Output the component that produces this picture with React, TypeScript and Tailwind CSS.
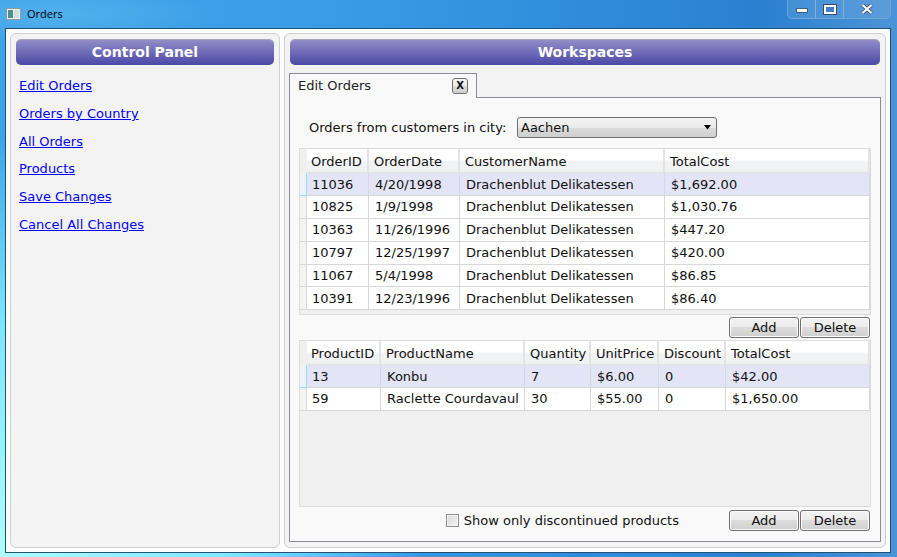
const orders = [
  ["11036", "4/20/1998", "Drachenblut Delikatessen", "$1,692.00"],
  ["10825", "1/9/1998", "Drachenblut Delikatessen", "$1,030.76"],
  ["10363", "11/26/1996", "Drachenblut Delikatessen", "$447.20"],
  ["10797", "12/25/1997", "Drachenblut Delikatessen", "$420.00"],
  ["11067", "5/4/1998", "Drachenblut Delikatessen", "$86.85"],
  ["10391", "12/23/1996", "Drachenblut Delikatessen", "$86.40"],
];
const products = [
  ["13", "Konbu", "7", "$6.00", "0", "$42.00"],
  ["59", "Raclette Courdavaul", "30", "$55.00", "0", "$1,650.00"],
];
const links = ["Edit Orders", "Orders by Country", "All Orders", "Products", "Save Changes", "Cancel All Changes"];

const ordersCols = "grid-cols-[7px_62px_91px_205px_205px]";
const productsCols = "grid-cols-[7px_74px_144px_66px_68px_67px_144px]";
const btnBg = "bg-[linear-gradient(#f3f3f3,#ebebeb_50%,#dddddd_50%,#cfcfcf)]";

function Grid({ cols, headers, rows }: { cols: string; headers: [string, string][]; rows: string[][] }) {
  return (
    <div className="h-[167px] border border-[#dcdcdc] bg-[#f0f0f0] overflow-hidden">
      <div className={`grid ${cols} h-[24.5px]`}>
        <div className="bg-[#f0f0f0]" />
        {headers.map(([h, pad]) => (
          <div key={h} className={`${pad} pt-[3px] flex items-center border-r-2 border-b border-[#e3e3e3] bg-[linear-gradient(#ffffff,#ffffff_45%,#f2f3f5_55%,#eff0f2)] whitespace-nowrap overflow-hidden`}>
            {h}
          </div>
        ))}
      </div>
      {rows.map((r, i) => (
        <div key={i} className={`grid ${cols} h-[22.8px]`}>
          <div className={i === 0 ? "border-r border-b border-[#9ad9f5] bg-[linear-gradient(90deg,#f2f2f2,#e6f5fd)]" : "border-r border-b border-[#d8d8d8] bg-[#f4f4f4]"} />
          {r.map((c, j) => (
            <div key={j} className={`${j === 0 ? "pl-[5px]" : "pl-[6px]"} flex items-center border-r border-b border-[#d8d8d8] whitespace-nowrap overflow-hidden ${i === 0 ? "bg-[#e4e4f7]" : "bg-white"}`}>
              {c}
            </div>
          ))}
        </div>
      ))}
    </div>
  );
}

function Btn({ label }: { label: string }) {
  return (
    <button className={`w-[70px] h-[21px] rounded-[3px] border border-[#707070] ${btnBg} flex items-center justify-center shadow-[inset_0_0_0_1px_#fbfbfb] text-[#111]`}>
      {label}
    </button>
  );
}

function PanelHeader({ title }: { title: string }) {
  return (
    <div className="h-[26px] rounded-[5px] bg-[linear-gradient(#908dc6,#4b48a8)] border-t border-[#a5a5b5] flex items-center justify-center text-white font-bold text-[14px] shrink-0">
      {title}
    </div>
  );
}

export default function App() {
  return (
    <div className="w-[897px] h-[557px] overflow-hidden flex flex-col text-[13px] text-[#111] font-['DejaVu_Sans','Verdana',sans-serif] bg-[radial-gradient(ellipse_420px_420px_at_0%_100%,#aefcff_0%,#7fe6ff_55%,transparent_100%),radial-gradient(ellipse_160px_30px_at_60px_14px,#52b0ec_0%,transparent_100%),linear-gradient(90deg,#3fa3e9,#3a9de6_35%,#2e88d8_72%,#2b80d0_85%,#4c94d8)]">
      {/* Title bar */}
      <div className="h-[28px] shrink-0 flex items-start justify-between pl-[6px] pr-[6px]">
        <div className="flex items-center gap-[6px] h-[28px]">
          <svg width="15" height="12" viewBox="0 0 15 12">
            <rect x="0.5" y="0.5" width="14" height="11" fill="#eef0f0" stroke="#8c9aa6" />
            <rect x="2" y="2" width="5" height="8" fill="#4d8f8f" />
            <rect x="8" y="2" width="5" height="8" fill="#d6dedf" />
          </svg>
          <span className="text-[11px] text-black font-['Open_Sans',sans-serif]">Orders</span>
        </div>
        <div className="flex h-[19px] w-[104px] border border-t-0 border-[#6fa6d8] rounded-b-[5px] bg-[#ffffff18]">
          <div className="w-[28px] flex items-center justify-center border-r border-[#7fb0de]">
            <div className="w-[12px] h-[5px] mt-[3px] bg-white border border-[#4a5a70]" />
          </div>
          <div className="w-[28px] flex items-center justify-center border-r border-[#7fb0de]">
            <div className="w-[12px] h-[9px] border-2 border-white bg-[#3f7fc8] outline outline-1 outline-[#3a4a60]" />
          </div>
          <div className="flex-1 flex items-center justify-center">
            <svg width="12" height="10" viewBox="0 0 12 10">
              <path d="M1.5 1 L10.5 9 M10.5 1 L1.5 9" stroke="#3a4a60" strokeWidth="3.6" />
              <path d="M1.5 1 L10.5 9 M10.5 1 L1.5 9" stroke="#ffffff" strokeWidth="2.2" />
            </svg>
          </div>
        </div>
      </div>

      {/* Client area */}
      <div className="mx-[5px] mr-[6px] h-[525px] border border-[#1f5273] bg-white p-[4px] flex gap-[4px] shrink-0">
        {/* Left panel */}
        <div className="w-[270px] h-[515px] rounded-[6px] border border-[#cfcfcf] bg-[#f3f3f3] p-[5px] flex flex-col">
          <PanelHeader title="Control Panel" />
          <div className="mt-[7.2px] flex flex-col pl-[3px]">
            {links.map((l) => (
              <a key={l} className="h-[27.7px] flex items-center text-[#0000ff] underline cursor-pointer">{l}</a>
            ))}
          </div>
        </div>

        {/* Right panel */}
        <div className="w-[602px] h-[515px] rounded-[6px] border border-[#cfcfcf] bg-[#f3f3f3] p-[5px] flex flex-col">
          <PanelHeader title="Workspaces" />
          {/* Tab strip */}
          <div className="-ml-[1px] mt-[8px] relative z-10 w-[188px] h-[25px] -mb-[1px] border border-b-0 border-[#898c95] bg-[#f9f9f9] flex items-center justify-between pl-[8px] pr-[8px]">
            <span className="text-[#222]">Edit Orders</span>
            <button className={`w-[16px] h-[16px] rounded-[3px] border border-[#707070] ${btnBg} flex items-center justify-center text-[10px] font-bold leading-none`}>X</button>
          </div>
          {/* Tab content */}
          <div className="-ml-[1px] w-[592px] h-[446px] border border-[#898c95] bg-[#f9f9f9] px-[9px] pt-[19px] flex flex-col">
            <div className="flex items-center h-[21px] pl-[10px]">
              <span className="w-[208px]">Orders from customers in city:</span>
              <div className={`relative w-[200px] h-[21px] rounded-[3px] border border-[#707070] ${btnBg} flex items-center pl-[3px]`}>
                Aachen
                <svg className="absolute right-[5px] top-[7px]" width="7" height="5" viewBox="0 0 7 5"><path d="M0 0H7L3.5 4.5Z" fill="#000" /></svg>
              </div>
            </div>
            <div className="mt-[10px]">
              <Grid cols={ordersCols} headers={[["OrderID", "pl-[4px]"], ["OrderDate", "pl-[5px]"], ["CustomerName", "pl-[5px]"], ["TotalCost", "pl-[5px]"]]} rows={orders} />
            </div>
            <div className="flex justify-end gap-[1px] mt-[2px] pr-[1px]">
              <Btn label="Add" />
              <Btn label="Delete" />
            </div>
            <div className="mt-[2px]">
              <Grid cols={productsCols} headers={[["ProductID", "pl-[4px]"], ["ProductName", "pl-[5px]"], ["Quantity", "pl-[5px]"], ["UnitPrice", "pl-[5px]"], ["Discount", "pl-[5px]"], ["TotalCost", "pl-[5px]"]]} rows={products} />
            </div>
            <div className="flex items-center justify-end mt-[3px] pr-[1px]">
              <div className="w-[13px] h-[13px] border border-[#8e8f8f] bg-[linear-gradient(135deg,#d8d8d8,#f4f4f4)] shadow-[inset_0_0_0_1px_#f4f4f4] mr-[5px]" />
              <span className="mr-[50px]">Show only discontinued products</span>
              <div className="flex gap-[1px]">
                <Btn label="Add" />
                <Btn label="Delete" />
              </div>
            </div>
          </div>
        </div>
      </div>
    </div>
  );
}
